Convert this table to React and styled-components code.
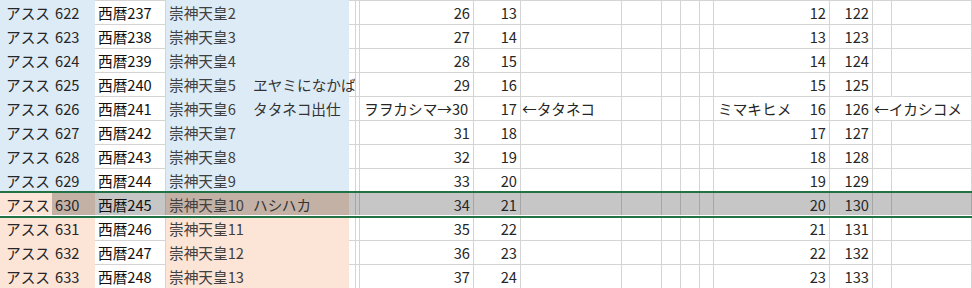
import React from "react";
import styled, { createGlobalStyle, css } from "styled-components";

const GlobalStyle = createGlobalStyle`
  html, body {
    margin: 0;
    padding: 0;
    background: #fff;
    overflow: hidden;
  }
  body {
    font-family: "Noto Sans CJK JP", "Noto Sans", sans-serif;
  }
`;

const FILL = { blue: "#DDEBF7", peach: "#FCE4D6" };
const SEL = { blue: "#ABB6C0", peach: "#C4B1A6", none: "#C6C6C6" };
const GRID = "#D4D4D4";
const GRID_SEL = "#A6A6A6";
const GREEN = "#217346";

// column widths, last one takes the rest
const W = {
  a: 52, b: 43, c: 71, d: 84, e: 99, f: 7, g2: 4, g: 114, h: 47,
  i: 101, j: 40, k: 19, l: 19, m: 14, n: 116, o: 43, p: 19,
};

const Sheet = styled.div`
  width: 972px;
  height: 288px;
  overflow: hidden;
  display: flex;
  flex-direction: column;
  font-size: 14.67px;
  color: #262626;
`;

const Row = styled.div`
  display: flex;
  flex: none;
  height: 24px;

  ${(p) =>
    p.$selected &&
    css`
      position: relative;
      z-index: 1;

      &::before {
        content: "";
        position: absolute;
        left: 0;
        right: 0;
        top: -1px;
        height: 2px;
        background: ${GREEN};
      }

      &::after {
        content: "";
        position: absolute;
        left: 0;
        right: 0;
        bottom: -2px;
        height: 2px;
        border-top: 1px solid #fff;
        background: ${GREEN};
      }
    `}
`;

const bgOf = (p) => {
  if (p.$sel) return SEL[p.$fill || "none"];
  return p.$fill ? FILL[p.$fill] : "transparent";
};

const lineOf = (p) => {
  if (p.$fill) return bgOf(p);
  return p.$sel ? GRID_SEL : GRID;
};

const Cell = styled.div`
  box-sizing: border-box;
  flex: ${(p) => (p.$w ? `0 0 ${p.$w}px` : "1 1 auto")};
  min-width: 0;
  height: 24px;
  display: flex;
  align-items: center;
  justify-content: ${(p) =>
    p.$right ? "flex-end" : p.$split ? "space-between" : "flex-start"};
  padding: 0 ${(p) => (p.$right ? 3 : 0)}px 0 ${(p) => p.$pl ?? 3}px;
  white-space: nowrap;
  overflow: visible;
  background: ${bgOf};
  border-top: 1px solid ${lineOf};
  border-right: 1px solid
    ${(p) => (p.$open ? "transparent" : lineOf(p))};
  color: ${(p) => p.$color || "inherit"};
`;

const Tail = styled.span`
  margin-right: 3px;
`;

const notes = { 3: "ヱヤミになかば", 4: "タタネコ出仕", 8: "ハシハカ" };

const rows = Array.from({ length: 12 }, (_, n) => ({
  n,
  era: 622 + n,
  year: 237 + n,
  emp: 2 + n,
  g: 26 + n,
  h: 13 + n,
  nn: 12 + n,
  o: 122 + n,
  fill: n < 8 ? "blue" : "peach",
  selected: n === 8,
}));

const SheetRow = ({ r }) => {
  const sel = r.selected;
  const special = r.n === 4;
  return (
    <Row $selected={sel}>
      <Cell $w={W.a} $fill={r.fill} $pl={6}>
        アスス
      </Cell>
      <Cell $w={W.b} $fill={r.fill} $sel={sel}>
        {r.era}
      </Cell>
      <Cell $w={W.c} $sel={sel} $color="#111">
        西暦{r.year}
      </Cell>
      <Cell $w={W.d} $fill={r.fill} $sel={sel} $color="#404040">
        崇神天皇{r.emp}
      </Cell>
      <Cell $w={W.e} $fill={r.fill} $sel={sel} $color="#333">
        {notes[r.n] || ""}
      </Cell>
      <Cell $w={W.f} $sel={sel} />
      <Cell $w={W.g2} $sel={sel} />
      {special ? (
        <Cell $w={W.g} $sel={sel} $pl={4}>
          ヲヲカシマ→30
        </Cell>
      ) : (
        <Cell $w={W.g} $sel={sel} $right>
          {r.g}
        </Cell>
      )}
      <Cell $w={W.h} $sel={sel} $right>
        {r.h}
      </Cell>
      <Cell $w={W.i} $sel={sel} $pl={1}>
        {special ? "←タタネコ" : ""}
      </Cell>
      <Cell $w={W.j} $sel={sel} />
      <Cell $w={W.k} $sel={sel} />
      <Cell $w={W.l} $sel={sel} />
      <Cell $w={W.m} $sel={sel} />
      {special ? (
        <Cell $w={W.n} $sel={sel} $split $pl={4}>
          <span>ミマキヒメ</span>
          <Tail>{r.nn}</Tail>
        </Cell>
      ) : (
        <Cell $w={W.n} $sel={sel} $right>
          {r.nn}
        </Cell>
      )}
      <Cell $w={W.o} $sel={sel} $right>
        {r.o}
      </Cell>
      <Cell $w={W.p} $sel={sel} $pl={1} $open={special}>
        {special ? "←イカシコメ" : ""}
      </Cell>
      <Cell $sel={sel} />
    </Row>
  );
};

export default function App() {
  return (
    <>
      <GlobalStyle />
      <Sheet>
        {rows.map((r) => (
          <SheetRow key={r.n} r={r} />
        ))}
      </Sheet>
    </>
  );
}
